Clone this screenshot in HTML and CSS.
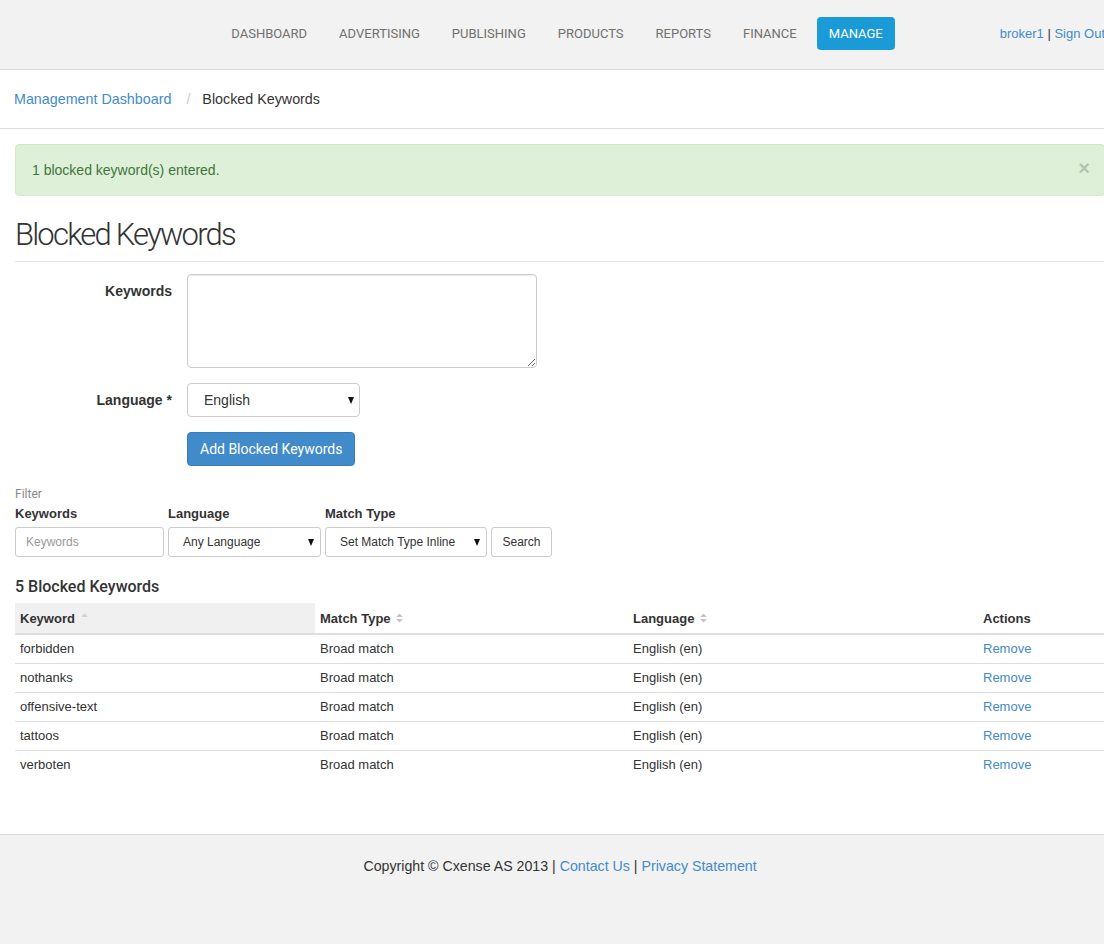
FILE: index.html
```html
<!DOCTYPE html>
<html lang="en">
<head>
    <meta charset="UTF-8">
    <title>Blocked Keywords</title>
    <link rel="stylesheet" href="styles.css">
</head>
<body>
    <div class="page">
        <header class="topbar">
            <nav class="main-nav">
                <a href="#">DASHBOARD</a>
                <a href="#">ADVERTISING</a>
                <a href="#">PUBLISHING</a>
                <a href="#">PRODUCTS</a>
                <a href="#">REPORTS</a>
                <a href="#">FINANCE</a>
                <a href="#" class="active">MANAGE</a>
            </nav>
            <div class="user-links"><a href="#">broker1</a> | <a href="#">Sign Out</a></div>
        </header>

        <div class="breadcrumb">
            <a href="#">Management Dashboard</a>
            <span class="divider">/</span>
            <span class="current">Blocked Keywords</span>
        </div>

        <main class="content">
            <div class="alert">
                1 blocked keyword(s) entered.
                <span class="close">&times;</span>
            </div>

            <h1 class="page-header">Blocked Keywords</h1>

            <form class="form-horizontal">
                <div class="form-row">
                    <label class="form-label">Keywords</label>
                    <textarea class="form-textarea"></textarea>
                </div>
                <div class="form-row">
                    <label class="form-label">Language *</label>
                    <div class="select-wrap select-lang">
                        <select class="form-select">
                            <option>English</option>
                        </select>
                    </div>
                </div>
                <div class="form-row">
                    <span class="form-label"></span>
                    <button type="button" class="btn-primary">Add Blocked Keywords</button>
                </div>
            </form>

            <div class="filter">
                <div class="filter-title">Filter</div>
                <div class="filter-row">
                    <div class="filter-field">
                        <label>Keywords</label>
                        <input type="text" class="filter-input" placeholder="Keywords">
                    </div>
                    <div class="filter-field">
                        <label>Language</label>
                        <div class="select-wrap select-small select-any">
                            <select><option>Any Language</option></select>
                        </div>
                    </div>
                    <div class="filter-field">
                        <label>Match Type</label>
                        <div class="select-wrap select-small select-match">
                            <select><option>Set Match Type Inline</option></select>
                        </div>
                    </div>
                    <button type="button" class="btn-search">Search</button>
                </div>
            </div>

            <h4 class="count">5 Blocked Keywords</h4>

            <table class="keyword-table">
                <thead>
                    <tr>
                        <th class="col-keyword sorted">Keyword <svg class="sort" width="7" height="10" viewBox="0 0 7 10"><path d="M0 4 L3.5 0 L7 4 Z" fill="#d4d4d4"/></svg></th>
                        <th class="col-match">Match Type <svg class="sort" width="7" height="10" viewBox="0 0 7 10"><path d="M0 4 L3.5 0.5 L7 4 Z M0 6 L3.5 9.5 L7 6 Z" fill="#c4c4c4"/></svg></th>
                        <th class="col-lang">Language <svg class="sort" width="7" height="10" viewBox="0 0 7 10"><path d="M0 4 L3.5 0.5 L7 4 Z M0 6 L3.5 9.5 L7 6 Z" fill="#c4c4c4"/></svg></th>
                        <th class="col-actions">Actions</th>
                    </tr>
                </thead>
                <tbody>
                    <tr><td>forbidden</td><td>Broad match</td><td>English (en)</td><td><a href="#">Remove</a></td></tr>
                    <tr><td>nothanks</td><td>Broad match</td><td>English (en)</td><td><a href="#">Remove</a></td></tr>
                    <tr><td>offensive-text</td><td>Broad match</td><td>English (en)</td><td><a href="#">Remove</a></td></tr>
                    <tr><td>tattoos</td><td>Broad match</td><td>English (en)</td><td><a href="#">Remove</a></td></tr>
                    <tr><td>verboten</td><td>Broad match</td><td>English (en)</td><td><a href="#">Remove</a></td></tr>
                </tbody>
            </table>
        </main>

        <footer class="footer">
            Copyright &copy; Cxense AS 2013 | <a href="#">Contact Us</a> | <a href="#">Privacy Statement</a>
        </footer>
    </div>
</body>
</html>
```

FILE: styles.css
```css
* {
    box-sizing: border-box;
}

html, body {
    margin: 0;
    padding: 0;
    overflow-x: hidden;
}

body {
    font-family: "Liberation Sans", Arial, sans-serif;
    font-size: 14px;
    color: #333;
    background: #f2f2f2;
}

a {
    color: #428bca;
    text-decoration: none;
}

.page {
    width: 1120px;
    background: #fff;
}

/* top bar */
.topbar {
    height: 70px;
    background: #f2f2f2;
    border-bottom: 1px solid #dcdcdc;
    display: flex;
    align-items: center;
    justify-content: center;
    position: relative;
}

.main-nav {
    display: flex;
    gap: 8px;
    margin-left: -6px;
    margin-top: -2px;
}

.main-nav a {
    font-family: Roboto, sans-serif;
    font-size: 13px;
    color: #707070;
    padding: 0 12px;
    height: 33px;
    line-height: 33px;
    border-radius: 4px;
}

.main-nav a.active {
    background: #1a9bd7;
    color: #fff;
}

.user-links {
    position: absolute;
    right: 15px;
    top: 26px;
    font-size: 13px;
    color: #333;
}

/* breadcrumb */
.breadcrumb {
    height: 59px;
    border-bottom: 1px solid #dcdcdc;
    padding: 0 14px;
    display: flex;
    align-items: center;
    font-size: 14.3px;
}

.breadcrumb .divider {
    color: #ccc;
    padding: 0 12px 0 15px;
}

.breadcrumb .current {
    color: #333;
}

.content {
    padding: 15px 15px 55px;
}

/* alert */
.alert {
    height: 52px;
    background: #dff0d8;
    border: 1px solid #d6e9c6;
    border-radius: 4px;
    color: #3c763d;
    padding: 0 16px;
    display: flex;
    align-items: center;
    justify-content: space-between;
}

.alert .close {
    font-size: 20px;
    font-weight: bold;
    color: #000;
    opacity: 0.18;
    margin-top: -4px;
    margin-right: -2px;
}

.page-header {
    font-family: Roboto, sans-serif;
    font-weight: 300;
    font-size: 31px;
    letter-spacing: -1.8px;
    line-height: 36px;
    color: #333;
    margin: 21px 0 12px;
    padding-bottom: 8px;
    border-bottom: 1px solid #e3e3e3;
}

/* form */
.form-row {
    display: flex;
    align-items: flex-start;
    margin-bottom: 15px;
}

.form-label {
    width: 157px;
    text-align: right;
    font-weight: bold;
    padding-top: 9px;
    margin-right: 15px;
    flex-shrink: 0;
}

.form-textarea {
    width: 350px;
    height: 94px;
    border: 1px solid #ccc;
    border-radius: 4px;
    box-shadow: inset 0 1px 1px rgba(0, 0, 0, 0.075);
}

.select-wrap {
    position: relative;
}

.select-wrap::after {
    content: "";
    position: absolute;
    right: 6px;
    top: 50%;
    margin-top: -3px;
    border-left: 3.5px solid transparent;
    border-right: 3.5px solid transparent;
    border-top: 7px solid #111;
    pointer-events: none;
}

.select-wrap select {
    appearance: none;
    -webkit-appearance: none;
    width: 100%;
    height: 100%;
    border: 1px solid #ccc;
    border-radius: 4px;
    background: #fff;
    color: #333;
    font-family: "Liberation Sans", Arial, sans-serif;
}

.select-lang {
    width: 173px;
    height: 34px;
}

.select-lang select {
    font-size: 14px;
    padding-left: 16px;
}

.btn-primary {
    height: 34px;
    padding: 0 12px;
    background: #428bca;
    border: 1px solid #357ebd;
    border-radius: 4px;
    color: #fff;
    font-family: Roboto, sans-serif;
    font-size: 14px;
}

/* filter */
.filter {
    margin-top: 21px;
}

.filter-title {
    font-family: Roboto, sans-serif;
    font-size: 12px;
    color: #8a8a8a;
    margin-bottom: 5px;
}

.filter-row {
    display: flex;
    align-items: flex-end;
    gap: 4px;
}

.filter-field label {
    display: block;
    font-size: 13px;
    font-weight: bold;
    margin-bottom: 6px;
}

.filter-input {
    width: 149px;
    height: 30px;
    border: 1px solid #ccc;
    border-radius: 3px;
    padding: 0 10px;
    font-size: 12px;
    font-family: "Liberation Sans", Arial, sans-serif;
}

.filter-input::placeholder {
    color: #999;
}

.select-small {
    height: 30px;
}

.select-small select {
    font-size: 12px;
    padding-left: 14px;
    border-radius: 3px;
}

.select-small::after {
    right: 7px;
}

.select-any {
    width: 153px;
}

.select-match {
    width: 162px;
}

.btn-search {
    height: 30px;
    width: 61px;
    background: #fff;
    border: 1px solid #ccc;
    border-radius: 3px;
    font-size: 12px;
    font-family: "Liberation Sans", Arial, sans-serif;
    color: #333;
}

.count {
    font-family: Roboto, sans-serif;
    font-weight: 500;
    font-size: 16px;
    margin: 20px 0 7px;
}

/* table */
.keyword-table {
    width: 1090px;
    border-collapse: collapse;
    font-size: 13px;
}

.keyword-table th,
.keyword-table td {
    text-align: left;
    padding: 5px 5px;
    height: 29px;
}

.keyword-table th {
    border-bottom: 2px solid #ddd;
    height: 31px;
    padding-top: 6px;
    padding-bottom: 6px;
}

.keyword-table td {
    border-top: 1px solid #ddd;
}

.keyword-table tbody tr:first-child td {
    border-top: none;
}

.keyword-table th.sorted {
    background: #f0f0f0;
}

.col-keyword { width: 300px; }
.col-match { width: 313px; }
.col-lang { width: 350px; }

.sort {
    margin-left: 2px;
    vertical-align: 0;
}

/* footer */
.footer {
    background: #f2f2f2;
    border-top: 1px solid #dcdcdc;
    height: 120px;
    text-align: center;
    padding-top: 23px;
    font-size: 14.2px;
    color: #333;
}
```
